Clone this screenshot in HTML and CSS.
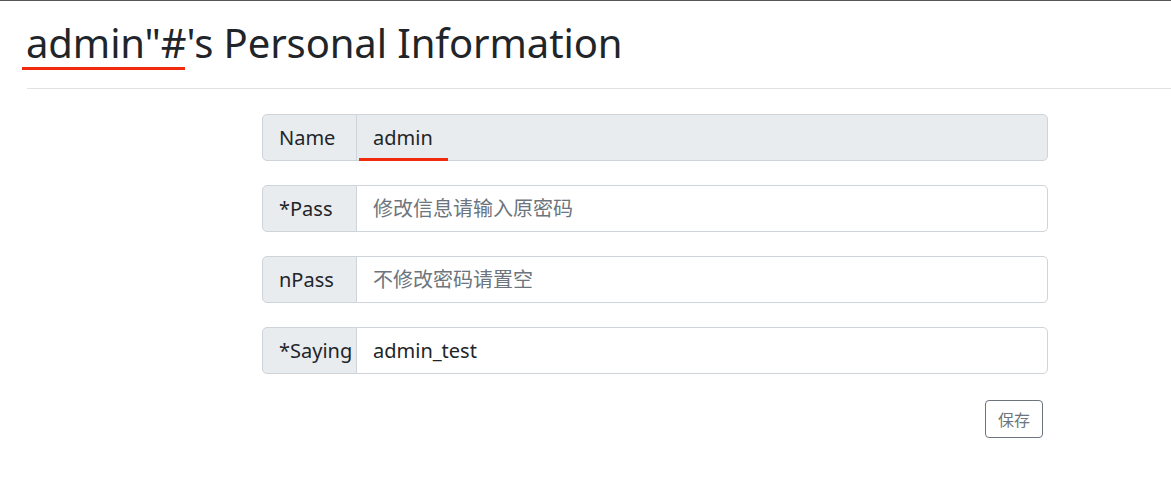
FILE: index.html
```html
<!DOCTYPE html>
<html lang="zh">
<head>
<meta charset="utf-8">
<title>Personal Information</title>
<link rel="stylesheet" href="styles.css">
</head>
<body>
<div class="topline"></div>
<header class="page-header">
  <h1 class="title"><span class="marked">admin"#</span>'s Personal Information</h1>
  <hr class="rule">
</header>
<main class="form-wrap">
  <form class="profile-form">
    <div class="input-group">
      <span class="group-label">Name</span>
      <input class="group-input" type="text" value="admin" disabled>
      <span class="mark-line"></span>
    </div>
    <div class="input-group">
      <span class="group-label">*Pass</span>
      <input class="group-input" type="password" placeholder="修改信息请输入原密码">
    </div>
    <div class="input-group">
      <span class="group-label">nPass</span>
      <input class="group-input" type="password" placeholder="不修改密码请置空">
    </div>
    <div class="input-group">
      <span class="group-label">*Saying</span>
      <input class="group-input" type="text" value="admin_test">
    </div>
    <div class="actions">
      <button class="btn-save" type="button">保存</button>
    </div>
  </form>
</main>
</body>
</html>
```
FILE: styles.css
```css
html, body {
  margin: 0;
  padding: 0;
  background: #fff;
}
body {
  font-family: "Noto Sans", "Noto Sans CJK SC", sans-serif;
  color: #212529;
  width: 1171px;
  overflow: hidden;
}
.topline {
  height: 1px;
  background: #555;
}
.page-header {
  padding-left: 27px;
}
.title {
  margin: 18px 0 0 -1px;
  font-size: 40px;
  font-weight: 400;
  line-height: 48px;
  letter-spacing: -0.1px;
  color: #212529;
}
.marked {
  position: relative;
}
.marked::after {
  content: "";
  position: absolute;
  left: -4px;
  width: 163px;
  top: 52px;
  height: 3px;
  background: #f02a0c;
}
.rule {
  margin: 21px 0 0 0;
  border: 0;
  border-top: 1px solid #e2e2e2;
}
.form-wrap {
  padding: 25px 0 0 262px;
}
.profile-form {
  width: 786px;
  display: flex;
  flex-direction: column;
  gap: 24px;
}
.input-group {
  position: relative;
  display: flex;
  height: 47px;
}
.group-label {
  box-sizing: border-box;
  width: 95px;
  flex: none;
  display: flex;
  align-items: center;
  padding-left: 16px;
  white-space: nowrap;
  font-size: 20px;
  color: #212529;
  background: #e9ecef;
  border: 1px solid #ced4da;
  border-radius: 5px 0 0 5px;
}
.group-input {
  box-sizing: border-box;
  flex: 1;
  min-width: 0;
  height: 47px;
  margin: 0;
  margin-left: -1px;
  padding: 0 16px;
  font-family: "Noto Sans", "Noto Sans CJK SC", sans-serif;
  font-size: 20px;
  color: #212529;
  background: #fff;
  border: 1px solid #ced4da;
  border-radius: 0 5px 5px 0;
  outline: none;
}
.group-input:disabled {
  background: #e9ecef;
  color: #212529;
  opacity: 1;
}
.group-input::placeholder {
  color: #6c757d;
  font-family: "Noto Sans CJK SC", sans-serif;
}
.mark-line {
  position: absolute;
  left: 97px;
  width: 89px;
  bottom: 0;
  height: 3px;
  background: #f02a0c;
}
.actions {
  display: flex;
  justify-content: flex-end;
  padding-right: 5px;
  margin-top: 2px;
}
.btn-save {
  box-sizing: border-box;
  width: 58px;
  height: 38px;
  padding: 0;
  font-family: "Noto Sans CJK SC", sans-serif;
  font-size: 16px;
  color: #6c757d;
  background: #fff;
  border: 1px solid #6c757d;
  border-radius: 4px;
}
```
